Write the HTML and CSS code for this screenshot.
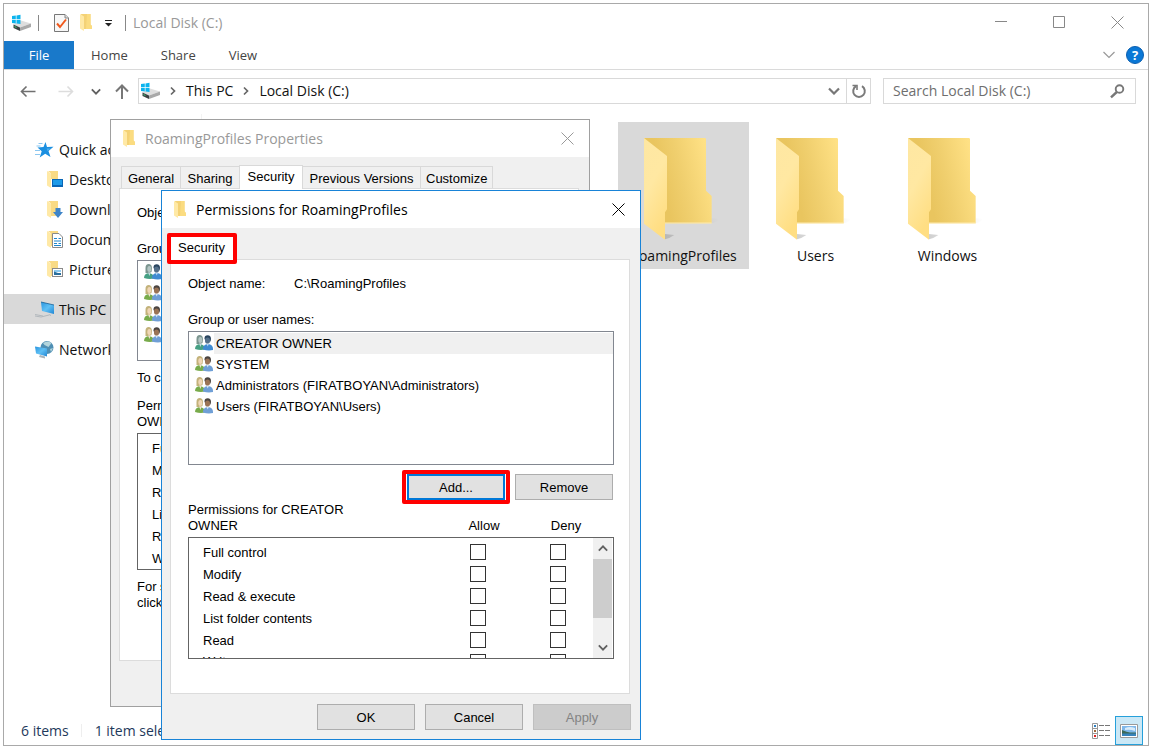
FILE: index.html
```html
<!DOCTYPE html>
<html lang="en">
<head>
<meta charset="utf-8">
<title>Local Disk (C:)</title>
<link rel="stylesheet" href="styles.css">
</head>
<body>
<svg class="defs" aria-hidden="true">
  <defs>
    <linearGradient id="gback" x1="0.3" y1="0.6" x2="1" y2="0.4"><stop offset="0" stop-color="#e9c55f"/><stop offset="0.4" stop-color="#f0cf6e"/><stop offset="1" stop-color="#ffe185"/></linearGradient>
    <linearGradient id="gfront" x1="0" y1="0" x2="0.4" y2="1"><stop offset="0" stop-color="#fee7a2"/><stop offset="0.5" stop-color="#ffe8a2"/><stop offset="1" stop-color="#ffde83"/></linearGradient>
    <linearGradient id="gshade" x1="0" y1="0" x2="1" y2="0"><stop offset="0" stop-color="#777" stop-opacity="0.35"/><stop offset="1" stop-color="#777" stop-opacity="0"/></linearGradient>
    <linearGradient id="gblue" x1="0" y1="0" x2="1" y2="1"><stop offset="0" stop-color="#2a94de"/><stop offset="0.5" stop-color="#5fc0f5"/><stop offset="1" stop-color="#2287d4"/></linearGradient>
    <symbol id="folder-big" viewBox="132 84 237 306">
      <path d="M334 325l24 2q-8 10-24 13zM195 372l28 3q-12 9-28 13z" fill="url(#gshade)"/>
      <path d="M132 84H314q4 0 4 4V242l17 16V340H195L180 200z" fill="url(#gback)"/>
      <path d="M132 84L201 138V298l-6 9V389L132 341z" fill="url(#gfront)"/>
      <path d="M195 339H335" stroke="#ffebb0" stroke-width="3"/>
    </symbol>
    <symbol id="folder" viewBox="0 0 12 17">
      <path d="M1 0H10.500V10.500L12 12V15H3z" fill="#f4d276"/>
      <path d="M7 0h3.500v10.500L12 12v3H6z" fill="#fbdc80"/>
      <path d="M0 0L4 2.500V17L0 14.500z" fill="#ffe9a6"/>
    </symbol>
    <symbol id="drive" viewBox="0 0 20 18">
      <path d="M1.500 10.500L9 6.500l10 3L8 13.500z" fill="#dedede"/>
      <path d="M8 13.500l11-4v3.500L8 17z" fill="#a9a9a9"/>
      <path d="M1.500 10.500L8 13.500V17l-6.500-3z" fill="#3c4144"/>
      <path d="M2.500 12l2 1v1l-2-1z" fill="#38d07a"/>
      <path d="M0 2l3.800-.5v3.600H0zM4.500 1.400L8.500.8v4.300h-4zM0 5.800h3.800v3.600L0 9zM4.500 5.800h4v4.300l-4-.6z" fill="#0cb4ee"/>
    </symbol>
    <symbol id="chev-r" viewBox="0 0 6 10"><path d="M1 1.500L4.500 5 1 8.500" fill="none" stroke="#666" stroke-width="1.700"/></symbol>
    <symbol id="chev-d" viewBox="0 0 12 8"><path d="M1 1.500l5 5 5-5" fill="none" stroke="currentColor" stroke-width="2.200"/></symbol>
    <symbol id="chev-thin" viewBox="0 0 12 8"><path d="M.5 1l5.500 5.500L11.500 1" fill="none" stroke="currentColor" stroke-width="1.200"/></symbol>
    <symbol id="cross" viewBox="0 0 13 13"><path d="M.5.5l12 12M12.500.5l-12 12" fill="none" stroke="currentColor"/></symbol>
    <symbol id="users" viewBox="0 0 18 16">
      <path d="M0 14q0-4.500 5-5 4 .5 5 4v1.500q-5 1-10-.5z" fill="#78ab4b"/>
      <path d="M1.500 4Q1.500 0 5 .1 8 .5 8 4.500L7.500 8l-2 1L1.500 9z" fill="#c3b27a"/>
      <ellipse cx="5.300" cy="5" rx="2" ry="3" fill="#efd6b6"/>
      <path d="M4 8.500h2.500l-1 3.500z" fill="#f0e3d2"/>
      <path d="M8 14.500q-.5-5 5-5.500 5 .5 5 5v1q-5 1-10-.5z" fill="#6f9fd6"/>
      <path d="M9.500 3.500Q9.500.3 12.700.3 16 .5 16 4l-.5 2.500h-5z" fill="#4a4440"/>
      <ellipse cx="12.500" cy="5.600" rx="2.500" ry="3.200" fill="#9a7355"/>
      <path d="M11.500 8.800h2.500l-1.300 2.700z" fill="#dbe8f7"/>
    </symbol>
    <symbol id="users-dim" viewBox="0 0 18 16">
      <path d="M0 14q0-4.500 5-5 4 .5 5 4v1.500q-5 1-10-.5z" fill="#46a084"/>
      <path d="M1.500 4Q1.500 0 5 .1 8 .5 8 4.500L7.500 8l-2 1L1.500 9z" fill="#7b958f"/>
      <ellipse cx="5.300" cy="5" rx="2" ry="3" fill="#b4c6c4"/>
      <path d="M4 8.500h2.500l-1 3.500z" fill="#c3d8dc"/>
      <path d="M8 14.500q-.5-5 5-5.500 5 .5 5 5v1q-5 1-10-.5z" fill="#3f8bd2"/>
      <path d="M9.500 3.500Q9.500.3 12.700.3 16 .5 16 4l-.5 2.500h-5z" fill="#2a455f"/>
      <ellipse cx="12.500" cy="5.600" rx="2.500" ry="3.200" fill="#54708a"/>
      <path d="M11.500 8.800h2.500l-1.300 2.700z" fill="#bcd9f5"/>
    </symbol>
  </defs>
</svg>

<main class="window">
  <header class="titlebar">
    <svg class="drive"><use href="#drive"/></svg>
    <span class="sep sep-first"></span>
    <svg class="check" viewBox="0 0 15 18"><path d="M.5.5H11l3.500 3.500v13.500H.5z" fill="#f7f7f7" stroke="#777"/><path d="M11 .5V4h3.500" fill="#ddd" stroke="#888"/><path d="M3 9.500l3 3.500 6-7.500" fill="none" stroke="#f0581b" stroke-width="2"/></svg>
    <svg class="folder"><use href="#folder"/></svg>
    <svg class="customize" viewBox="0 0 7 7"><path d="M0 .5h7" stroke="#222"/><path d="M0 3h7L3.500 6.500z" fill="#222"/></svg>
    <span class="sep"></span>
    <h1 class="title">Local Disk (C:)</h1>
    <div class="controls">
      <button class="plain" aria-label="Minimize"><svg class="i13" viewBox="0 0 13 13"><path d="M0 5.500h12" stroke="#888"/></svg></button>
      <button class="plain" aria-label="Maximize"><svg class="i13" viewBox="0 0 13 13"><path d="M.5.5h11v11H.5z" fill="none" stroke="#888"/></svg></button>
      <button class="plain grey" aria-label="Close"><svg class="i13"><use href="#cross"/></svg></button>
    </div>
  </header>

  <nav class="ribbon">
    <button class="file">File</button>
    <button class="rtab">Home</button>
    <button class="rtab">Share</button>
    <button class="rtab">View</button>
    <span class="ribbon-end">
      <button class="plain light" aria-label="Expand ribbon"><svg class="chev"><use href="#chev-thin"/></svg></button>
      <button class="help" aria-label="Help">?</button>
    </span>
  </nav>

  <div class="addressrow">
    <button class="plain back" aria-label="Back"><svg class="i16" viewBox="0 0 16 16"><path d="M15.500 8.500H1.500M6.500 3.500l-5 5 5 5" fill="none" stroke="#707070" stroke-width="1.600"/></svg></button>
    <button class="plain fwd" aria-label="Forward"><svg class="i16" viewBox="0 0 16 16"><path d="M.5 8.500h14M9.500 3.500l5 5-5 5" fill="none" stroke="#ddd" stroke-width="1.600"/></svg></button>
    <button class="plain recent" aria-label="Recent"><svg class="chev-s"><use href="#chev-d"/></svg></button>
    <button class="plain up" aria-label="Up"><svg class="i16" viewBox="0 0 16 16"><path d="M8 16V2.500M2 8.500l6-6 6 6" fill="none" stroke="#777" stroke-width="2"/></svg></button>
    <div class="address">
      <svg class="drive"><use href="#drive"/></svg>
      <svg class="crumb-chev"><use href="#chev-r"/></svg>
      <a class="crumb" href="#">This PC</a>
      <svg class="crumb-chev"><use href="#chev-r"/></svg>
      <a class="crumb" href="#">Local Disk (C:)</a>
      <button class="plain drop" aria-label="Show history"><svg class="chev"><use href="#chev-d"/></svg></button>
      <button class="plain refresh" aria-label="Refresh"><svg class="i16" viewBox="0 0 16 16"><path d="M11 3.200A5.800 5.800 0 1 1 5 3.200" fill="none" stroke="#7a7a7a" stroke-width="2"/><path d="M1.500 2.500H6v4.500" fill="none" stroke="#7a7a7a" stroke-width="1.600"/></svg></button>
    </div>
    <div class="search">
      <input type="text" placeholder="Search Local Disk (C:)" aria-label="Search Local Disk (C:)">
      <svg class="i16" viewBox="0 0 16 16"><circle cx="9.500" cy="6" r="3.800" fill="none" stroke="#777" stroke-width="1.900"/><path d="M6.800 9L1 14.300" stroke="#777" stroke-width="2.400"/></svg>
    </div>
  </div>

  <div class="body">
    <nav class="tree">
      <a class="node" href="#"><svg class="i20" viewBox="0 0 20 20"><path d="M10.500 2l1.500 5 6.500-.2-5 4.200 2 6-5.300-3.200-5.500 3.700 2-6.300L2.500 7.500l6-.5z" fill="#1b8fe0"/><path d="M10.500 5.500l1 3 4.500.1-3.500 2.400z" fill="#4aaef0"/><path d="M3.500 3.500h4M1.500 6h4M0 10.500h5M0 14.500h5" stroke="#6fb9ec" stroke-width=".8"/></svg>Quick access</a>
      <a class="node sub" href="#"><svg class="i18" viewBox="0 0 18 18"><path d="M1 0h10v8H4V2.500z" fill="#f9da84"/><path d="M0 0l4 2.500V17L0 14.500z" fill="#ffe9a6"/><rect x="5" y="8" width="11" height="8" fill="#0a66b5"/><rect x="6" y="9" width="9" height="5" fill="#1e9be8"/></svg>Desktop</a>
      <a class="node sub" href="#"><svg class="i18" viewBox="0 0 18 18"><path d="M1 0h10v15H4V2.500z" fill="#f9da84"/><path d="M0 0l4 2.500V17L0 14.500z" fill="#ffe9a6"/><path d="M8.500 7h5v4H16l-5 6-5-6h2.500z" fill="#3f85c8"/></svg>Downloads</a>
      <a class="node sub" href="#"><svg class="i18" viewBox="0 0 18 18"><path d="M1 0h10v15H4V2.500z" fill="#f9da84"/><path d="M0 0l4 2.500V17L0 14.500z" fill="#ffe9a6"/><path d="M5.500 2.500H12L15.500 6v10.500h-10z" fill="#fff" stroke="#8a8a8a"/><path d="M7 7.500h3M7 10h7M7 12.500h3M7 14.500h7M11.500 7.500h2.500M11.500 12.500h2.500" stroke="#1e86cc"/></svg>Documents</a>
      <a class="node sub" href="#"><svg class="i18" viewBox="0 0 18 18"><path d="M1 0h10v15H4V2.500z" fill="#f9da84"/><path d="M0 0l4 2.500V17L0 14.500z" fill="#ffe9a6"/><rect x="5.500" y="7.500" width="10" height="8" fill="#fff" stroke="#8a8a8a"/><path d="M7 9h7v2H7z" fill="#8ccaf0"/><path d="M7 10.500l4 1.500h3v2H7z" fill="#2a6f9e"/></svg>Pictures</a>
      <a class="node top selected" href="#"><svg class="i20" viewBox="0 0 20 20"><path d="M6 2l13 3v9L7 11z" fill="url(#gblue)"/><path d="M6 2l13 3" stroke="#175f96" stroke-width=".8"/><path d="M0 14.500l8 1.500M0 16l6 1 8-2M14 14.500l2 1" fill="none" stroke="#b2b8bc"/></svg>This PC</a>
      <a class="node top" href="#"><svg class="i20" viewBox="0 0 20 20"><circle cx="12" cy="7.500" r="6.500" fill="#4f8fb4"/><path d="M8 3q5-3 8.500 0l-3 4-4-2zM15 9l3-1-2 4z" fill="#b4d5dc"/><path d="M0 6.500l12 2v8L1 13.500z" fill="url(#gblue)"/><path d="M5 15l5 1.500v2l-6-1.500z" fill="#a9b4ba"/></svg>Network</a>
    </nav>
    <section class="files">
      <a class="tile picked" href="#"><svg><use href="#folder-big"/></svg>RoamingProfiles</a>
      <a class="tile" href="#"><svg><use href="#folder-big"/></svg>Users</a>
      <a class="tile" href="#"><svg><use href="#folder-big"/></svg>Windows</a>
    </section>
  </div>

  <footer class="status">
    <span>6 items</span>
    <span class="status-sep"></span>
    <span>1 item selected</span>
    <span class="views">
      <button class="plain list" aria-label="Details"><svg viewBox="0 0 18 16"><path d="M.5.5h5v15h-5zM.5 5.500h5M.5 10.500h5" fill="#fff" stroke="#999"/><path d="M7 2.500h5M13 2.500h5M7 7.500h5M13 7.500h5M7 12.500h5M13 12.500h5" stroke="#777"/><path d="M2 2h2v2H2z" fill="#2f80c0"/><path d="M2 7h2v2H2z" fill="#a06a3a"/><path d="M2 12h2v2H2z" fill="#d22"/></svg></button>
      <button class="plain large" aria-label="Large icons"><svg viewBox="0 0 18 14"><path d="M.5.5h17v13H.5z" fill="#fff" stroke="#999"/><path d="M2 2h14v10H2z" fill="#7fb8ea"/><path d="M5 4q5-2 10 0v3q-5-2-10-1z" fill="#d9ecfa"/><path d="M2 6q5 2 8 2.500h6V10H2z" fill="#3c6a58"/><path d="M2 9.500h14V12H2z" fill="#3683bb"/></svg></button>
    </span>
  </footer>
</main>

<section class="dialog properties" aria-label="RoamingProfiles Properties">
  <header class="dlg-title"><svg class="folder"><use href="#folder"/></svg><h2>RoamingProfiles Properties</h2><button class="plain" aria-label="Close properties"><svg class="i13"><use href="#cross"/></svg></button></header>
  <div class="tabs">
    <button class="tab">General</button><button class="tab">Sharing</button><button class="tab active">Security</button><button class="tab wide">Previous Versions</button><button class="tab medium">Customize</button>
  </div>
  <div class="panel">
    <p class="object"><span>Object name:</span></p>
    <p class="label">Group or user names:</p>
    <ul class="names">
      <li><svg><use href="#users-dim"/></svg></li>
      <li><svg><use href="#users"/></svg></li>
      <li><svg><use href="#users"/></svg></li>
      <li><svg><use href="#users"/></svg></li>
    </ul>
    <p class="edit-note">To change permissions, click Edit.</p>
    <p class="perm-for">Permissions for CREATOR OWNER</p>
    <ul class="readonly">
      <li>Full control</li><li>Modify</li><li>Read &amp; execute</li><li>List folder contents</li><li>Read</li><li>Write</li>
    </ul>
    <p class="special">For special permissions or advanced settings,<br>click Advanced.</p>
  </div>
</section>

<section class="dialog permissions" aria-label="Permissions for RoamingProfiles">
  <header class="dlg-title"><svg class="folder"><use href="#folder"/></svg><h2>Permissions for RoamingProfiles</h2><button class="plain" aria-label="Close permissions"><svg class="i13"><use href="#cross"/></svg></button></header>
  <div class="tabs">
    <button class="tab active marked">Security</button>
  </div>
  <div class="panel">
    <p class="object"><span>Object name:</span><span>C:\RoamingProfiles</span></p>
    <p class="label">Group or user names:</p>
    <ul class="names">
      <li class="current"><svg><use href="#users-dim"/></svg><span>CREATOR OWNER</span></li>
      <li><svg><use href="#users"/></svg><span>SYSTEM</span></li>
      <li><svg><use href="#users"/></svg><span>Administrators (FIRATBOYAN\Administrators)</span></li>
      <li><svg><use href="#users"/></svg><span>Users (FIRATBOYAN\Users)</span></li>
    </ul>
    <div class="actions"><button class="btn default marked">Add...</button><button class="btn">Remove</button></div>
    <div class="perm-head"><p>Permissions for CREATOR OWNER</p><span>Allow</span><span>Deny</span></div>
    <div class="perm-box">
      <table class="perms">
        <tbody>
          <tr><th scope="row">Full control</th><td><input type="checkbox" aria-label="Allow Full control"></td><td><input type="checkbox" aria-label="Deny Full control"></td></tr>
          <tr><th scope="row">Modify</th><td><input type="checkbox" aria-label="Allow Modify"></td><td><input type="checkbox" aria-label="Deny Modify"></td></tr>
          <tr><th scope="row">Read &amp; execute</th><td><input type="checkbox" aria-label="Allow Read &amp; execute"></td><td><input type="checkbox" aria-label="Deny Read &amp; execute"></td></tr>
          <tr><th scope="row">List folder contents</th><td><input type="checkbox" aria-label="Allow List folder contents"></td><td><input type="checkbox" aria-label="Deny List folder contents"></td></tr>
          <tr><th scope="row">Read</th><td><input type="checkbox" aria-label="Allow Read"></td><td><input type="checkbox" aria-label="Deny Read"></td></tr>
          <tr class="last"><th scope="row">Write</th><td><input type="checkbox" aria-label="Allow Write"></td><td><input type="checkbox" aria-label="Deny Write"></td></tr>
        </tbody>
      </table>
      <div class="scroll">
        <button class="plain" aria-label="Scroll up"><svg class="chev-s flip"><use href="#chev-d"/></svg></button>
        <span class="thumb"></span>
        <button class="plain" aria-label="Scroll down"><svg class="chev-s"><use href="#chev-d"/></svg></button>
      </div>
    </div>
  </div>
  <footer class="dlg-buttons"><button class="btn">OK</button><button class="btn">Cancel</button><button class="btn" disabled>Apply</button></footer>
</section>
</body>
</html>
```
FILE: styles.css
```css
* { box-sizing: border-box; }
html, body { height: 100%; }
body {
  position: relative;
  margin: 0;
  padding: 3px 4px 3px 3px;
  overflow: hidden;
  background: #fff;
  color: #111;
  font: 14px/20px "Open Sans", "Noto Sans", sans-serif;
}
h1, h2, p, ul { margin: 0; padding: 0; font-size: inherit; font-weight: inherit; list-style: none; }
a { color: inherit; text-decoration: none; }
button { font: inherit; color: inherit; }
svg { display: block; flex: none; }
.defs { position: absolute; width: 0; height: 0; }
.plain { display: flex; align-items: center; justify-content: center; border: 0; padding: 0; background: none; }
.i13 { width: 13px; height: 13px; }
.i16 { width: 16px; height: 16px; }
.i18 { width: 18px; height: 18px; }
.i20 { width: 20px; height: 20px; }
.chev { width: 12px; height: 8px; }
.chev-s { width: 10px; height: 7px; color: #606060; }
.flip { transform: rotate(180deg); }
.drive { width: 20px; height: 18px; }
.folder { width: 12px; height: 17px; }

/* Explorer window */
.window { display: flex; flex-direction: column; height: 100%; border: 1px solid #a9a9a9; background: #fff; }
.titlebar { display: flex; align-items: center; height: 37px; padding-left: 8px; }
.sep { width: 1px; height: 16px; background: #888; }
.sep-first { margin-left: 6px; }
.check { width: 15px; height: 18px; margin: 0 11px 0 15px; }
.customize { width: 7px; height: 7px; margin: 2px 13px 0 13px; }
.title { margin-left: 7px; color: #999; }
.controls { display: flex; gap: 45px; margin-left: auto; padding-right: 24px; }
.grey { color: #888; }
.light { color: #999; }
.ribbon { display: flex; gap: 1px; height: 29px; border-bottom: 1px solid #dadada; font-size: 13px; color: #444; }
.ribbon button { line-height: 28px; }
.file { width: 70px; border: 0; padding: 0; background: #1979ca; color: #fff; }
.rtab { border: 0; padding: 0 16px; background: none; }
.ribbon-end { display: flex; align-items: center; gap: 11px; margin-left: auto; padding-right: 4px; }
.ribbon .help { width: 18px; height: 18px; border: 1px solid #0b5fb0; border-radius: 50%; padding: 0; background: #0a78d6; color: #fff; font-weight: 700; line-height: 16px; }
.addressrow { display: flex; align-items: center; height: 44px; padding: 0 12px 2px 16px; }
.fwd { margin-left: 22px; }
.recent { margin-left: 17px; }
.up { margin: 0 8px 0 13px; }
.address { display: flex; align-items: center; flex: 1; height: 26px; border: 1px solid #d9d9d9; padding-left: 2px; }
.crumb { padding-right: 1px; }
.crumb-chev { width: 6px; height: 10px; margin: 0 10px 0 9px; }
.drop { width: 24px; margin-left: auto; color: #777; }
.refresh { width: 24px; height: 24px; border-left: 1px solid #d9d9d9; }
.search { display: flex; align-items: center; width: 253px; height: 26px; margin-left: 12px; border: 1px solid #d9d9d9; padding: 0 9px; }
.search input { flex: 1; min-width: 0; border: 0; padding: 0; outline: 0; background: none; font: inherit; }
.search input::placeholder { color: #6e6e6e; opacity: 1; }
.body { display: flex; flex: 1; min-height: 0; }
.tree { width: 198px; padding-top: 20px; border-right: 1px solid #f3f3f3; }
.node { display: flex; align-items: center; gap: 4px; height: 30px; padding: 2px 0 0 31px; }
.sub { padding-left: 43px; }
.top { margin-top: 10px; }
.selected { background: #d9d9d9; }
.files { display: flex; align-items: flex-start; gap: 1px; padding: 8px 0 0 416px; }
.tile { display: flex; flex-direction: column; align-items: center; gap: 6px; width: 131px; padding: 16px 0 3px; }
.tile svg { width: 79px; height: 102px; }
.picked { background: #d9d9d9; }
.status { display: flex; align-items: center; height: 29px; padding: 0 5px 0 17px; color: #1e395b; }
.status-sep { width: 1px; height: 13px; margin: 0 13px 0 12px; background: #eee; }
.views { display: flex; align-items: center; gap: 5px; margin-left: auto; }
.list svg { width: 18px; height: 16px; }
.large { width: 28px; height: 29px; border: 1px solid #26a0da; background: #cbe8f6; }
.large svg { width: 18px; height: 14px; }

/* Dialogs */
.dialog { position: absolute; width: 480px; border: 1px solid #a0a0a0; background: #f0f0f0; font: 13px/16px "Liberation Sans", Arial, sans-serif; color: #000; }
.properties { left: 110px; top: 119px; height: 588px; }
.permissions { left: 161px; top: 190px; border-color: #1883d7; }
.dlg-title { display: flex; align-items: center; gap: 10px; height: 37px; padding: 0 15px 0 12px; background: #fff; font: 14px/20px "Open Sans", "Noto Sans", sans-serif; }
.dlg-title button { margin-left: auto; }
.properties .dlg-title { color: #999; }
.tabs { display: flex; align-items: flex-end; height: 31px; padding-left: 10px; }
.tab { height: 22px; margin-right: -1px; border: 1px solid #d9d9d9; border-bottom: 0; padding: 2px 5px 0; background: #f0f0f0; line-height: 20px; }
.tab.active { position: relative; z-index: 1; height: 24px; margin-bottom: -1px; padding: 0 6px 2px; background: #fff; }
.properties .tab { min-width: 60px; }
.properties .tab.active { min-width: 64px; }
.properties .wide { min-width: 119px; }
.properties .medium { min-width: 73px; }
.panel { display: flex; flex-direction: column; margin: 0 10px 0 8px; border: 1px solid #dcdcdc; padding: 16px 15px 34px 17px; background: #fff; }
.properties .panel { height: 473px; }
.object { display: grid; grid-template-columns: 106px 1fr; }
.label { margin-top: 20px; }
.names { margin-top: 3px; height: 101px; border: 1px solid #828790; padding: 1px 0 0 6px; }
.names li { display: flex; align-items: center; height: 21px; }
.names svg { width: 18px; height: 16px; margin: 0 1px 2px 0; }
.names span { flex: 1; padding-left: 2px; line-height: 21px; }
.names .current span { background: #f0f0f0; }
.edit-note { margin-top: 9px; }
.perm-for { width: 180px; margin-top: 12px; }
.readonly { height: 137px; margin-top: 3px; border: 1px solid #646464; padding: 4px 14px 0; line-height: 22px; }
.special { margin-top: 9px; }
.permissions .names { height: 134px; }
.btn { width: 98px; height: 26px; border: 1px solid #adadad; padding: 2px 0 0; background: #e1e1e1; }
.btn:disabled { border-color: #bfbfbf; background: #ccc; color: #838383; }
.default { border: 2px solid #0078d7; }
.actions { display: flex; justify-content: flex-end; gap: 10px; margin-top: 9px; padding-right: 1px; }
.marked { position: relative; }
.marked::after { content: ""; position: absolute; inset: -6px -7px; border: 4px solid #f00; border-radius: 2px; }
.permissions .tabs { padding-left: 8px; }
.tab.marked { width: 64px; height: 25px; border-color: #fff; padding: 0 1px 1px 0; }
.tab.marked::after { inset: -3px -4px -4px -4px; }
.perm-head { display: flex; align-items: flex-end; margin-top: 2px; }
.perm-head p { width: 180px; margin-right: auto; }
.perm-head span { width: 82px; text-align: center; }
.perm-head span:last-child { margin-right: 7px; }
.perm-box { display: flex; height: 122px; margin-top: 3px; border: 1px solid #646464; overflow: hidden; }
.perms { flex: 1; align-self: flex-start; margin-top: 3px; border-spacing: 0; table-layout: fixed; width: 100%; }
.perms th { height: 22px; padding: 2px 0 0 14px; font-weight: 400; text-align: left; }
.perms .last th { padding-top: 0; }
.perms td { width: 80px; padding: 0; }
.perms td:last-child { width: 43px; }
.perms input { display: block; width: 16px; height: 16px; margin: 0; appearance: none; border: 1px solid #333; background: #fff; }
.scroll { display: flex; flex-direction: column; width: 20px; flex: none; border-right: 1px solid #fff; background: #f0f0f0; }
.scroll button { height: 21px; }
.thumb { height: 59px; margin-bottom: auto; background: #cdcdcd; }
.dlg-buttons { display: flex; justify-content: flex-end; gap: 10px; padding: 10px 9px 9px; }
```
